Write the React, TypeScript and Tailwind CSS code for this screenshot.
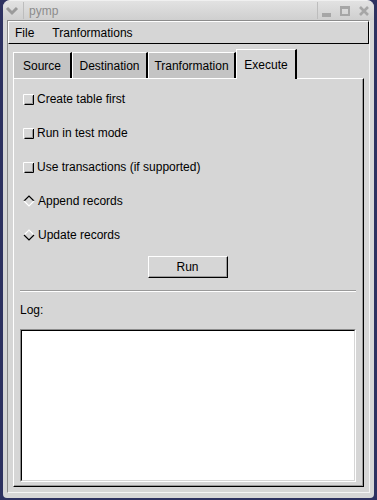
import React from 'react';

const Check: React.FC = () => (
  <svg width="11" height="11" viewBox="0 0 11 11" className="shrink-0">
    <rect x="0" y="0" width="11" height="11" fill="#d6d6d6" />
    <path d="M0.5 10.5V0.5H10.5" stroke="#ffffff" fill="none" />
    <path d="M1.5 10.5H10.5V1" stroke="#000000" fill="none" />
    <path d="M2 9.5H9.5V2" stroke="#9a9a9a" fill="none" />
  </svg>
);

const Radio: React.FC<{ on?: boolean }> = ({ on }) => (
  <svg width="12" height="12" viewBox="0 0 12 12" className="shrink-0">
    <path d="M6 1L11 6L6 11L1 6Z" fill="#d6d6d6" />
    <path d="M1 6L6 1L11 6" stroke={on ? '#000000' : '#ffffff'} strokeWidth="1.2" fill="none" />
    <path d="M1 6L6 11L11 6" stroke={on ? '#ffffff' : '#000000'} strokeWidth="1.2" fill="none" />
  </svg>
);

const Row: React.FC<{ icon: React.ReactNode; label: string }> = ({ icon, label }) => (
  <div className="h-[34px] flex items-center pl-[9px] gap-[3px]">
    {icon}
    <span>{label}</span>
  </div>
);

const tabs = [
  { t: 'Source', w: 'w-[59px]' },
  { t: 'Destination', w: 'w-[76px]' },
  { t: 'Tranformation', w: 'w-[88px]' },
];

export default function App() {
  return (
    <div className="w-[377px] h-[500px] bg-[#2d3160] px-[3px] font-['Liberation_Sans',Arial,sans-serif] text-[12px] text-black leading-[14px]">
      <div className="h-[498px] bg-[#d6d6d6] rounded-t-[7px] rounded-b-[4px] flex flex-col border-t border-[#f0f0f0]">
        {/* title bar */}
        <div className="h-[19px] flex items-center bg-gradient-to-b from-[#e2e2e2] to-[#cfcfcf] rounded-t-[7px] text-[#8c8c8c]">
          <svg width="14" height="10" viewBox="0 0 14 10" className="ml-[2px]">
            <path d="M2 2L7 7L12 2" stroke="#9a9a9a" strokeWidth="3" fill="none" />
          </svg>
          <div className="w-px h-[17px] bg-[#bdbdbd] ml-[4px]" />
          <span className="ml-[5px] text-[12px]">pymp</span>
          <div className="flex-1" />
          <div className="w-px h-[17px] bg-[#bdbdbd] mr-[4px]" />
          <div className="flex items-center gap-[9px] mr-[5px]">
            <div className="w-[9px] h-[4px] bg-[#a6a6a6] mt-[8px]" />
            <div className="w-[10px] h-[10px] border-[2px] border-t-[3px] border-[#a6a6a6]" />
            <svg width="10" height="10" viewBox="0 0 10 10">
              <path d="M1 1L9 9M9 1L1 9" stroke="#a6a6a6" strokeWidth="2.6" />
            </svg>
          </div>
        </div>
        {/* client */}
        <div className="mx-[4px] border border-[#8c8c8c] border-b-[#f4f4f4] border-r-[#f4f4f4] flex flex-col">
          {/* menubar */}
          <div className="h-[23px] border border-t-white border-l-white border-b-black border-r-black flex items-center">
            <span className="ml-[6px]">File</span>
            <span className="ml-[18px]">Tranformations</span>
          </div>
          {/* notebook */}
          <div className="px-[5px] pt-[5px] pb-[5px]">
            <div className="flex items-end h-[29px]">
              {tabs.map(({ t, w }) => (
                <div
                  key={t}
                  className={`h-[26px] ${w} pt-px bg-[#c4c4c4] border-t border-l border-white border-r-2 border-r-black flex items-center justify-center`}
                >
                  {t}
                </div>
              ))}
              <div className="relative z-10 h-[30px] w-[61px] -mb-px bg-[#d6d6d6] border-t border-l border-white border-r-2 border-r-black flex items-center justify-center">
                Execute
              </div>
            </div>
            <div className="border border-t-white border-l-white border-r-black border-b-black">
              <div className="border-r border-b border-[#9a9a9a] pt-[3px] pb-[3px]">
                <Row icon={<Check />} label="Create table first" />
                <Row icon={<Check />} label="Run in test mode" />
                <Row icon={<Check />} label="Use transactions (if supported)" />
                <Row icon={<Radio on />} label="Append records" />
                <Row icon={<Radio />} label="Update records" />
                <div className="flex justify-center mt-[4px]">
                  <button className="w-[80px] h-[22px] bg-[#d6d6d6] border border-t-white border-l-white border-b-black border-r-black">
                    <div className="h-full border-r border-b border-[#9a9a9a] flex items-center justify-center">Run</div>
                  </button>
                </div>
                <div className="mx-[6px] mt-[12px] h-[2px] border-t border-[#9a9a9a] border-b border-b-white" />
                <div className="mx-[6px] mt-[11px] h-[14px]">Log:</div>
                <div className="mx-[6px] mt-[12px] h-[153px] border border-t-[#8c8c8c] border-l-[#8c8c8c] border-b-white border-r-white">
                  <div className="h-full border border-t-black border-l-black border-b-[#d6d6d6] border-r-[#d6d6d6] bg-white" />
                </div>
              </div>
            </div>
          </div>
        </div>
      </div>
    </div>
  );
}
